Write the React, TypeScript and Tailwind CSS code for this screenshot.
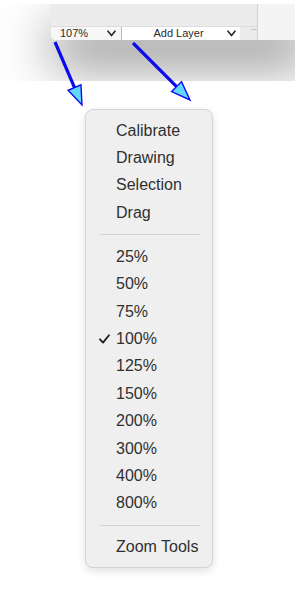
import React from "react";

// zoom popup menu opened from the window's bottom bar

const GROUPS: string[][] = [
  ["Calibrate", "Drawing", "Selection", "Drag"],
  ["25%", "50%", "75%", "100%", "125%", "150%", "200%", "300%", "400%", "800%"],
  ["Zoom Tools"],
];

const CHECKED = "100%";

function Chevron({ className }: { className?: string }) {
  return (
    <svg width="9" height="7" viewBox="0 0 9 7" fill="none" className={className}>
      <path d="M1 1.2 L4.5 5.6 L8 1.2" stroke="#2a2a2a" strokeWidth="1.6" strokeLinecap="round" strokeLinejoin="round" />
    </svg>
  );
}

function Arrow({ x1, y1, x2, y2 }: { x1: number; y1: number; x2: number; y2: number }) {
  const dx = x2 - x1;
  const dy = y2 - y1;
  const len = Math.hypot(dx, dy);
  const ux = dx / len;
  const uy = dy / len;
  const bx = x2 - ux * 19;
  const by = y2 - uy * 19;
  const px = uy * 7;
  const py = -ux * 7;
  const pts = `${x2},${y2} ${bx + px},${by + py} ${bx - px},${by - py}`;
  return (
    <g>
      <line x1={x1} y1={y1} x2={bx} y2={by} stroke="#0a0af0" strokeWidth="3.2" />
      <polygon points={pts} fill="#62d8ff" stroke="#0a0af0" strokeWidth="1.4" strokeLinejoin="miter" />
    </g>
  );
}

export default function App() {
  return (
    <div className="relative w-[300px] h-[600px] bg-white overflow-hidden font-['Liberation_Sans',Arial,sans-serif]">
      {/* window fragment */}
      <div className="pt-[4px]">
        <div className="w-[295px] h-[77px] overflow-hidden pl-[51px]">
          <div className="w-[260px] h-[36px] flex bg-[#ececec] rounded-bl-[5px] shadow-[0_24px_52px_rgba(0,0,0,0.5)]">
            <div className="w-[206px] flex flex-col">
              <div className="h-[22px] bg-[#ececec]" />
              <div className="h-[14px] flex border-t border-[#dddddd] text-[11px] leading-none text-[#2a2a2a]">
                <div className="w-[70px] flex items-center justify-between pl-[9px] pr-[5px] bg-[#f7f7f7] rounded-bl-[5px]">
                  <span>107%</span>
                  <Chevron />
                </div>
                <div className="w-px bg-[#bdbdbd]" />
                <div className="w-[118px] flex items-center bg-white pr-[4px]">
                  <span className="flex-1 text-center pl-[8px]">Add Layer</span>
                  <Chevron />
                </div>
                <div className="flex-1 flex items-start justify-end pt-[2px] bg-[#ebebeb]">
                  <div className="w-[6px] h-px bg-[#c4c4c4]" />
                </div>
              </div>
            </div>
            <div className="w-px bg-[#d2d2d2]" />
            <div className="flex-1 bg-[#f4f4f4]" />
          </div>
        </div>
      </div>

      {/* popup menu */}
      <div className="ml-[85px] mt-[28px] w-[128px] rounded-[8px] border border-[#d3d3d3] bg-[#efefef] pt-[7px] pb-[6px] shadow-[0_3px_8px_rgba(0,0,0,0.12)] text-[16px] text-[#303030]">
        {GROUPS.map((group, gi) => (
          <div key={gi}>
            {gi > 0 && (
              <div className="h-[16.6px] flex items-center pl-[14px] pr-[12px]">
                <div className="h-px w-full bg-[#d3d3d3]" />
              </div>
            )}
            {group.map((item) => (
              <div key={item} className="relative h-[27.4px] flex items-center pl-[30px]">
                {item === CHECKED && (
                  <svg width="11" height="10" viewBox="0 0 11 10" fill="none" className="absolute left-[13px] top-[9px]">
                    <path d="M1 5.3 L4 8.6 L10 1.2" stroke="#1f1f1f" strokeWidth="1.8" strokeLinecap="round" strokeLinejoin="round" />
                  </svg>
                )}
                <span>{item}</span>
              </div>
            ))}
          </div>
        ))}
      </div>

      {/* callout arrows */}
      <svg width="300" height="600" className="absolute left-0 top-0 pointer-events-none">
        <Arrow x1={55} y1={42} x2={82} y2={105} />
        <Arrow x1={133} y1={43} x2={190} y2={100} />
      </svg>
    </div>
  );
}
